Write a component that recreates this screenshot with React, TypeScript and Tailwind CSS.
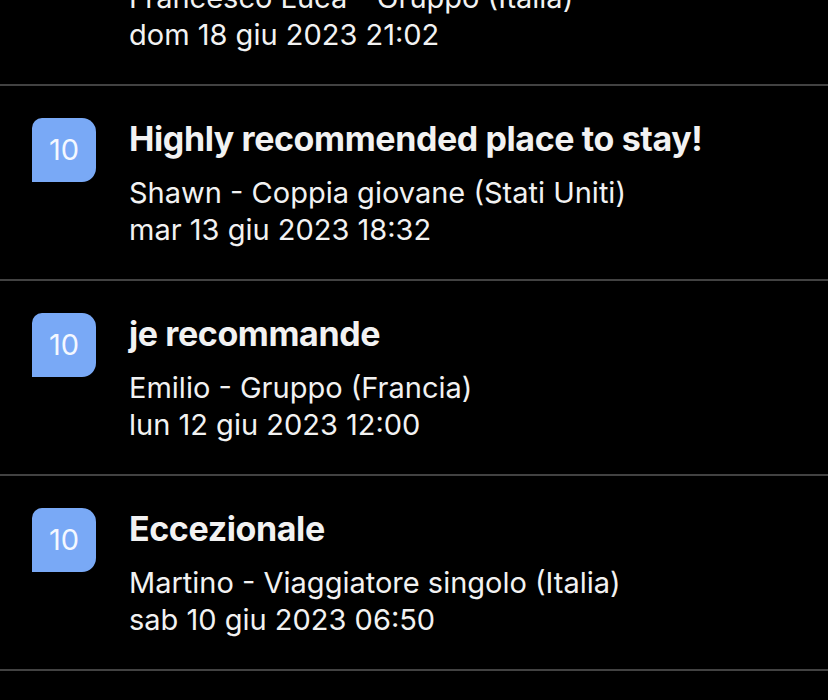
const reviews = [
  { score: 10, title: "Ottimo", author: "Francesco Luca - Gruppo (Italia)", date: "dom 18 giu 2023 21:02" },
  { score: 10, title: "Highly recommended place to stay!", author: "Shawn - Coppia giovane (Stati Uniti)", date: "mar 13 giu 2023 18:32" },
  { score: 10, title: "je recommande", author: "Emilio - Gruppo (Francia)", date: "lun 12 giu 2023 12:00" },
  { score: 10, title: "Eccezionale", author: "Martino - Viaggiatore singolo (Italia)", date: "sab 10 giu 2023 06:50" },
  { score: 10, title: "Fantastico", author: "Giulia - Famiglia (Italia)", date: "ven 9 giu 2023 10:15" },
];

function ScoreBadge({ score }: { score: number }) {
  return (
    <div className="w-16 h-16 shrink-0 flex items-center justify-center bg-[#79a9f6] text-[#f4f8ff] text-[29px] rounded-tl-[10px] rounded-tr-[14px] rounded-br-[14px] rounded-bl-none">
      {score}
    </div>
  );
}

export default function App() {
  return (
    <div className="h-[700px] overflow-hidden bg-black text-[#f2f2f2]" style={{ fontFamily: "Inter, 'Noto Sans', sans-serif" }}>
      <div className="-mt-[109px]">
        {reviews.map((r, i) => (
          <div key={i} className="border-b-2 border-[#424242]">
            <div className="flex gap-[33px] pl-8 pr-6 pt-8 pb-[31px]">
              <ScoreBadge score={r.score} />
              <div className="flex flex-col">
                <h3 className="text-[34px] leading-[42px] font-bold tracking-[-0.4px]">{r.title}</h3>
                <p className="mt-[14px] text-[29px] leading-[37px]">{r.author}</p>
                <p className="text-[29px] leading-[37px]">{r.date}</p>
              </div>
            </div>
          </div>
        ))}
      </div>
    </div>
  );
}
